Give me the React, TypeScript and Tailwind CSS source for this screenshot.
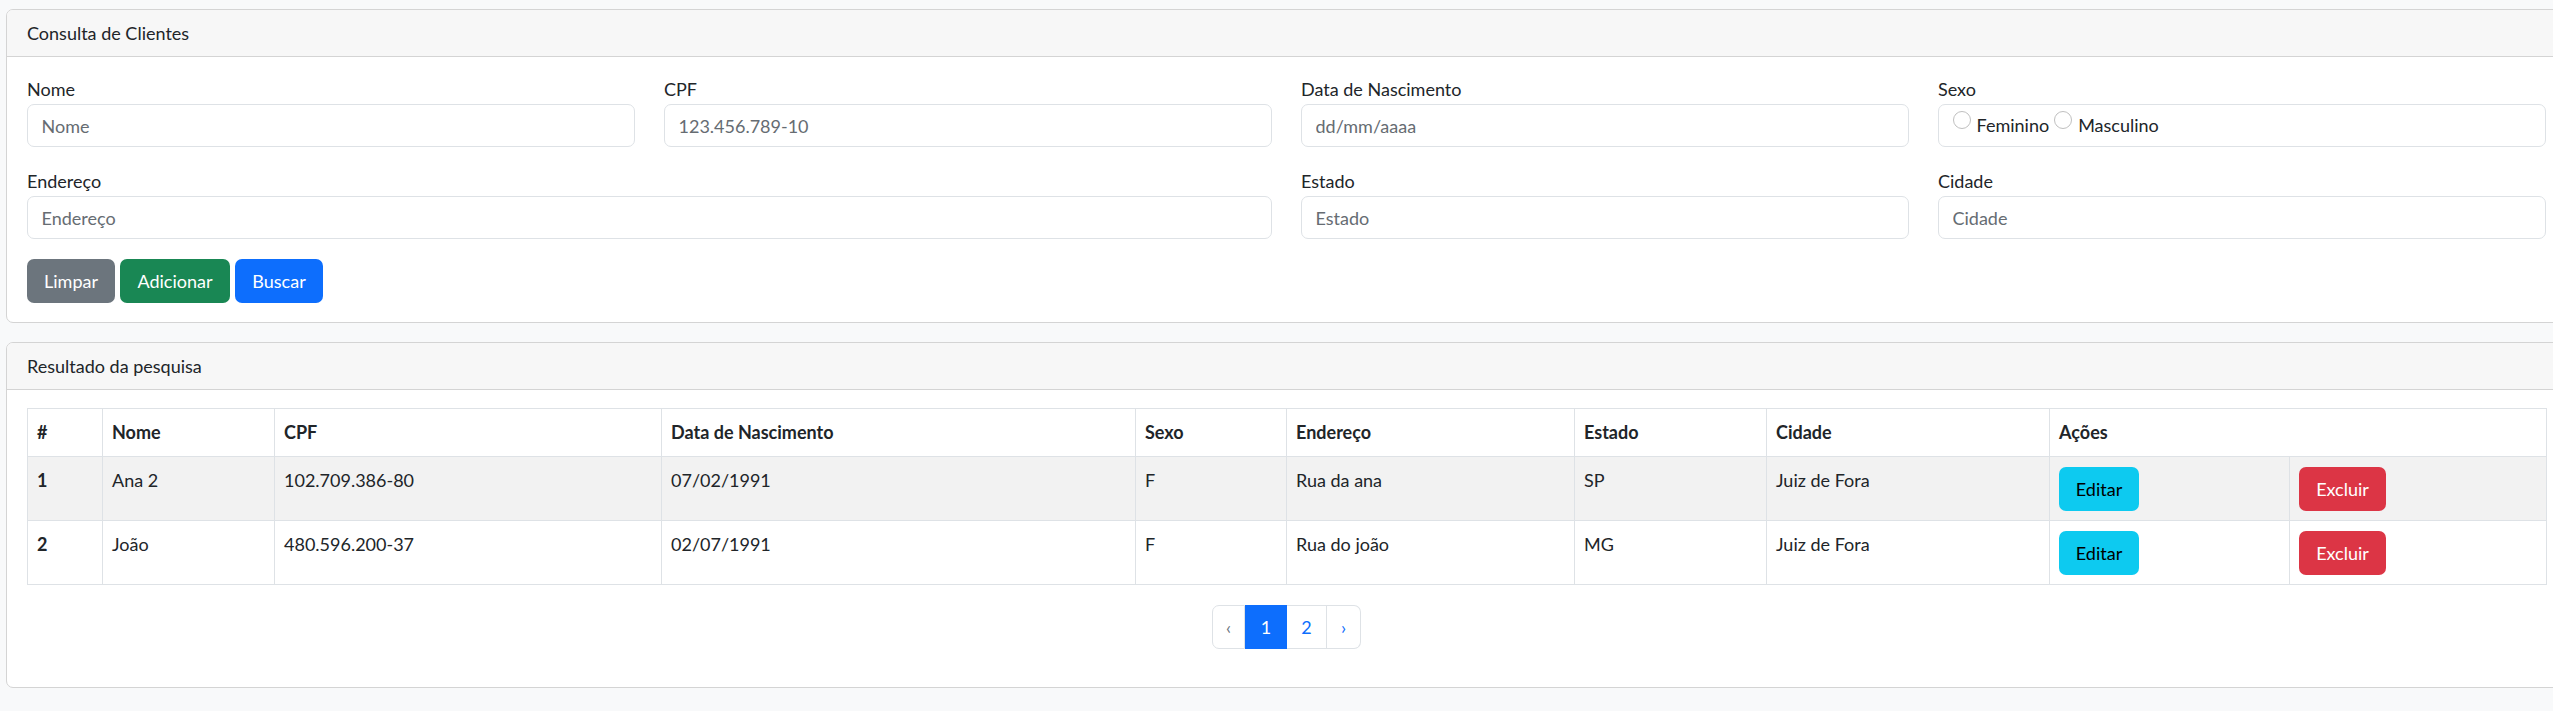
import React from "react";

interface Cliente { id: number; nome: string; cpf: string; nascimento: string; sexo: string; endereco: string; estado: string; cidade: string; }

const CLIENTES: Cliente[] = [
  { id: 1, nome: "Ana 2", cpf: "102.709.386-80", nascimento: "07/02/1991", sexo: "F", endereco: "Rua da ana", estado: "SP", cidade: "Juiz de Fora" },
  { id: 2, nome: "João", cpf: "480.596.200-37", nascimento: "02/07/1991", sexo: "F", endereco: "Rua do joão", estado: "MG", cidade: "Juiz de Fora" },
];

const COL_WIDTHS = [75, 172, 387, 474, 151, 288, 192, 283, 240, 257];
const HEADERS = ["#", "Nome", "CPF", "Data de Nascimento", "Sexo", "Endereço", "Estado", "Cidade"];

const inputCls = "block w-full h-[43px] rounded-[7px] border border-[#dee2e6] bg-white px-[13.5px] text-[18px] text-[#212529] placeholder:text-[#666c72] outline-none";
const labelCls = "block h-[27px] leading-[27px] mb-[1px]";
const cellCls = "border border-[#dee2e6] px-[9px] text-left";

function Field({ label, placeholder, className = "" }: { label: string; placeholder: string; className?: string }) {
  return (
    <div className={className}>
      <label className={labelCls}>{label}</label>
      <input type="text" placeholder={placeholder} className={inputCls} />
    </div>
  );
}

function Radio({ label }: { label: string }) {
  return (
    <label className="flex items-center">
      <span className="mb-[12px] mr-[6px] h-[18px] w-[18px] shrink-0 rounded-full border border-[#bfbfbf] bg-white" />
      <span>{label}</span>
    </label>
  );
}

function Card({ title, children, className = "" }: { title: string; children: React.ReactNode; className?: string }) {
  return (
    <section className={`ml-[6px] w-[2561px] rounded-[7px] border border-[#d4d4d4] bg-white ${className}`}>
      <div className="flex h-[47px] items-center rounded-t-[6px] border-b border-[#d4d4d4] bg-[#f7f7f7] px-[20px]">{title}</div>
      {children}
    </section>
  );
}

export default function App() {
  return (
    <div className="min-h-screen w-full overflow-hidden bg-[#f8f9fa] pt-[9px] font-['Lato',sans-serif] text-[18px] text-[#212529]">
      <Card title="Consulta de Clientes">
        <div className="px-[20px] pt-[19px] pb-[19px]">
          <div className="grid grid-cols-4 gap-x-[29px] gap-y-[21px]">
            <Field label="Nome" placeholder="Nome" />
            <Field label="CPF" placeholder="123.456.789-10" />
            <Field label="Data de Nascimento" placeholder="dd/mm/aaaa" />
            <div>
              <label className={labelCls}>Sexo</label>
              <div className="flex h-[43px] items-center gap-[5px] rounded-[7px] border border-[#dee2e6] bg-white px-[13.5px]">
                <Radio label="Feminino" />
                <Radio label="Masculino" />
              </div>
            </div>
            <Field label="Endereço" placeholder="Endereço" className="col-span-2" />
            <Field label="Estado" placeholder="Estado" />
            <Field label="Cidade" placeholder="Cidade" />
          </div>
          <div className="mt-[20px] flex gap-[5px]">
            <button className="h-[44px] w-[88px] rounded-[7px] bg-[#6c757d] text-white">Limpar</button>
            <button className="h-[44px] w-[110px] rounded-[7px] bg-[#198754] text-white">Adicionar</button>
            <button className="h-[44px] w-[88px] rounded-[7px] bg-[#0d6efd] text-white">Buscar</button>
          </div>
        </div>
      </Card>

      <Card title="Resultado da pesquisa" className="mt-[19px]">
        <div className="px-[20px] pt-[18px] pb-[38px]">
          <table className="w-full table-fixed border-collapse">
            <colgroup>
              {COL_WIDTHS.map((w, i) => <col key={i} style={{ width: w }} />)}
            </colgroup>
            <thead>
              <tr className="h-[48px] bg-white">
                {HEADERS.map((h) => <th key={h} className={`${cellCls} font-bold align-middle`}>{h}</th>)}
                <th colSpan={2} className={`${cellCls} font-bold align-middle`}>Ações</th>
              </tr>
            </thead>
            <tbody>
              {CLIENTES.map((c, i) => (
                <tr key={c.id} className={`h-[64px] ${i % 2 === 0 ? "bg-[#f2f2f2]" : "bg-white"}`}>
                  <th className={`${cellCls} align-top pt-[10px] font-bold`}>{c.id}</th>
                  {[c.nome, c.cpf, c.nascimento, c.sexo, c.endereco, c.estado, c.cidade].map((v, j) => (
                    <td key={j} className={`${cellCls} align-top pt-[10px]`}>{v}</td>
                  ))}
                  <td className={`${cellCls} align-top pt-[10px]`}>
                    <button className="h-[44px] w-[80px] rounded-[7px] bg-[#0dcaf0] text-black">Editar</button>
                  </td>
                  <td className={`${cellCls} align-top pt-[10px]`}>
                    <button className="h-[44px] w-[87px] rounded-[7px] bg-[#dc3545] text-white">Excluir</button>
                  </td>
                </tr>
              ))}
            </tbody>
          </table>

          <nav className="mt-[20px] flex justify-center">
            <div className="flex h-[44px]">
              <span className="flex w-[33px] items-center justify-center rounded-l-[7px] border border-[#dee2e6] text-[#6c757d]">‹</span>
              <span className="flex w-[42px] items-center justify-center border border-[#0d6efd] bg-[#0d6efd] text-white">1</span>
              <span className="flex w-[40px] items-center justify-center border-y border-r border-[#dee2e6] text-[#0d6efd]">2</span>
              <span className="flex w-[34px] items-center justify-center rounded-r-[7px] border-y border-r border-[#dee2e6] text-[#0d6efd]">›</span>
            </div>
          </nav>
        </div>
      </Card>
    </div>
  );
}
